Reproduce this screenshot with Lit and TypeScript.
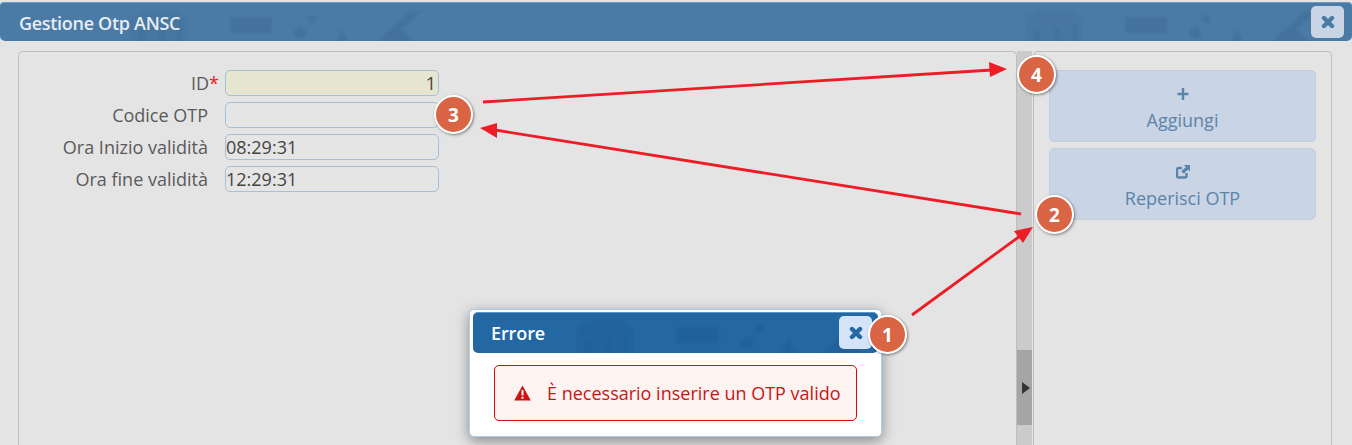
import { LitElement, html, css, svg } from "lit";
import { customElement } from "lit/decorators.js";

const sky = (x: number) => svg`<g transform="translate(${x} 0)">
  <path d="M0 14 L16 6 H44 L56 16 V40 H0Z" opacity=".45"/>
  <path d="M8 26h8v14H8zM28 24h8v16h-8zM46 22h6v18h-6z"/>
  <path d="M100 14h42v16h-42z"/>
  <circle cx="170" cy="30" r="6"/><circle cx="182" cy="16" r="4"/><path d="M205 40l7-14 7 14z"/>
  <path d="M245 40 L280 8 H292 L272 26 L286 40Z"/>
</g>`;

const texture = (offset: number) => svg`<svg class="tex" width="100%" height="100%" fill="#1a3a60" opacity="0.11">${sky(offset)}${sky(offset + 895)}${sky(offset + 1790)}</svg>`;

const times = svg`<svg width="14" height="14" viewBox="0 0 14 14"><path d="M3 3 L11 11 M11 3 L3 11" stroke="currentColor" stroke-width="4.4" stroke-linecap="round" fill="none"/></svg>`;

@customElement("app-root")
export class AppRoot extends LitElement {
  static styles = css`
    :host { display: block; position: relative; width: 1352px; height: 445px; overflow: hidden; background: #e4e4e4; font-family: "Open Sans", "Noto Sans", sans-serif; color: #555; }
    .page { display: flex; flex-direction: column; height: 100%; padding-top: 2px; box-sizing: border-box; }
    .title { position: relative; flex: none; height: 39px; box-sizing: border-box; display: flex; align-items: center; justify-content: space-between; padding: 0 8px 0 19px; background: #4a7ba6; border-top: 1px solid #6a9bc6; border-radius: 4px 4px 5px 5px; overflow: hidden; }
    .title span { position: relative; color: #e6ecf2; font-size: 18px; font-weight: 600; letter-spacing: -0.3px; padding-top: 2px; }
    .tex { position: absolute; inset: 0; filter: blur(1px); }
    .close { position: relative; display: flex; align-items: center; justify-content: center; width: 33px; height: 32px; border-radius: 5px; background: #c9d4e5; color: #4a7ba6; }
    .body { flex: 1; display: flex; padding: 10px 20px 0 18px; min-height: 0; }
    .panel { border: 1px solid #bdbdbd; border-bottom: none; border-radius: 5px 5px 0 0; box-sizing: border-box; flex: none; }
    .left { width: 999px; padding: 18px 0 0 0; display: flex; flex-direction: column; gap: 6px; }
    .row { display: flex; align-items: center; height: 26px; }
    .lab { width: 189px; text-align: right; font-size: 18px; line-height: 24px; color: #5a5a5a; white-space: nowrap; }
    .lab b { color: #ee2020; font-weight: 400; margin-right: -11px; }
    .inp { margin-left: 17px; width: 214px; height: 26px; box-sizing: border-box; border: 1px solid #a5c0d8; border-radius: 5px; background: #e5e5e5; font-size: 18px; line-height: 24px; color: #444; padding: 0; }
    .inp.id { background: #e5e5d0; text-align: right; padding-right: 2px; }
    .split { width: 16px; flex: none; background: #cbcbcb; border-right: 1px solid #e4e4e4; box-sizing: border-box; display: flex; flex-direction: column; padding-top: 299px; }
    .grip { height: 75px; background: #a5a5a5; display: flex; align-items: center; justify-content: center; }
    .grip i { display: block; border-left: 8px solid #333; border-top: 6px solid transparent; border-bottom: 6px solid transparent; margin-left: 2px; }
    .right { width: 299px; padding: 18px 15px 0 15px; display: flex; flex-direction: column; gap: 6px; }
    .btn { height: 72px; box-sizing: border-box; background: #c9d4e5; border: 1px solid #c0cede; border-radius: 5px; color: #5b84a9; display: flex; flex-direction: column; align-items: center; font-size: 18px; line-height: 24px; padding-top: 14px; gap: 5px; }
    .btn svg { display: block; height: 18px; }
    .modal { position: absolute; left: 469px; top: 309px; width: 413px; height: 128px; box-sizing: border-box; background: #fff; border: 1px solid #a9cdea; border-radius: 5px; padding: 2px 3px; box-shadow: 0 4px 14px rgba(0,0,0,.4); }
    .mhead { position: relative; height: 41px; background: #2367a3; border-top: 1px solid #5a96cc; box-sizing: border-box; border-radius: 5px; display: flex; align-items: center; padding-left: 18px; overflow: hidden; }
    .mhead span { position: relative; color: #fff; font-size: 18px; font-weight: 600; letter-spacing: -0.1px; }
    .mclose { position: absolute; left: 366px; top: 3px; width: 33px; height: 33px; border-radius: 5px; background: #d4e3f8; color: #2367a3; display: flex; align-items: center; justify-content: center; }
    .alert { margin: 12px 21px 0 21px; height: 56px; box-sizing: border-box; border: 1px solid #d80a0a; border-radius: 5px; background: #fdf3f1; color: #cc1414; font-size: 18px; display: flex; align-items: center; padding-left: 19px; gap: 16px; white-space: nowrap; }
    .overlay { position: absolute; inset: 0; pointer-events: none; }
    .badge { position: absolute; width: 39px; height: 39px; box-sizing: border-box; border-radius: 50%; background: #d96544; border: 2.5px solid #fff; box-shadow: 1px 1px 3px rgba(0,0,0,.45); color: #fff; font-family: "Open Sans", sans-serif; font-weight: 700; font-size: 19px; display: flex; align-items: center; justify-content: center; }
  `;

  render() {
    const badges: [string, number, number][] = [["1", 868, 315], ["2", 1035, 195], ["3", 434, 95], ["4", 1017, 55]];
    return html`
      <div class="page">
        <div class="title">${texture(130)}<span>Gestione Otp ANSC</span><div class="close">${times}</div></div>
        <div class="body">
          <div class="panel left">
            <div class="row"><div class="lab">ID<b>*</b></div><div class="inp id">1</div></div>
            <div class="row"><div class="lab">Codice OTP</div><div class="inp"></div></div>
            <div class="row"><div class="lab">Ora Inizio validità</div><div class="inp">08:29:31</div></div>
            <div class="row"><div class="lab">Ora fine validità</div><div class="inp">12:29:31</div></div>
          </div>
          <div class="split"><div class="grip"><i></i></div></div>
          <div class="panel right">
            <div class="btn"><svg width="14" height="18" viewBox="0 0 14 18"><path d="M7 3v12M1.500 9h11" stroke="currentColor" stroke-width="2.400" fill="none"/></svg><span>Aggiungi</span></div>
            <div class="btn"><svg width="14" height="18" viewBox="0 0 14 18"><path d="M10.500 10v3a1.500 1.500 0 0 1-1.500 1.500H2.500a1.500 1.500 0 0 1-1.500-1.500V6.500a1.500 1.500 0 0 1 1.500-1.500H6" stroke="currentColor" stroke-width="2.400" fill="none"/><path d="M7.500 2h6.500v6.500l-2-2-4.200 4.200-2.500-2.500L10 4z" fill="currentColor"/></svg><span>Reperisci OTP</span></div>
          </div>
        </div>
      </div>
      <div class="modal">
        <div class="mhead">${texture(104)}<span>Errore</span><div class="mclose">${times}</div></div>
        <div class="alert"><svg width="17" height="16" viewBox="0 0 17 16"><path d="M8.500 0.500 L16.800 15.500 H0.200Z" fill="#cc1414"/><path d="M8.500 5v5.500M8.500 11.800v2" stroke="#fdf3f1" stroke-width="2"/></svg><span>È necessario inserire un OTP valido</span></div>
      </div>
      <svg class="overlay" width="1352" height="445" viewBox="0 0 1352 445">
        <g stroke="#ee1c25" stroke-width="2.800" fill="#ee1c25">
          <path d="M912 315 L1020 236"/><path d="M1033 227 L1014 231 L1023 243Z" stroke-width="0"/>
          <path d="M1021 214 L495 130"/><path d="M480 128 L497 123 L497 138Z" stroke-width="0"/>
          <path d="M483 102 L992 70"/><path d="M1007 69 L989 62 L990 77Z" stroke-width="0"/>
        </g>
      </svg>
      ${badges.map(([t, x, y]) => html`<div class="badge" style="left:${x}px;top:${y}px">${t}</div>`)}
    `;
  }
}
